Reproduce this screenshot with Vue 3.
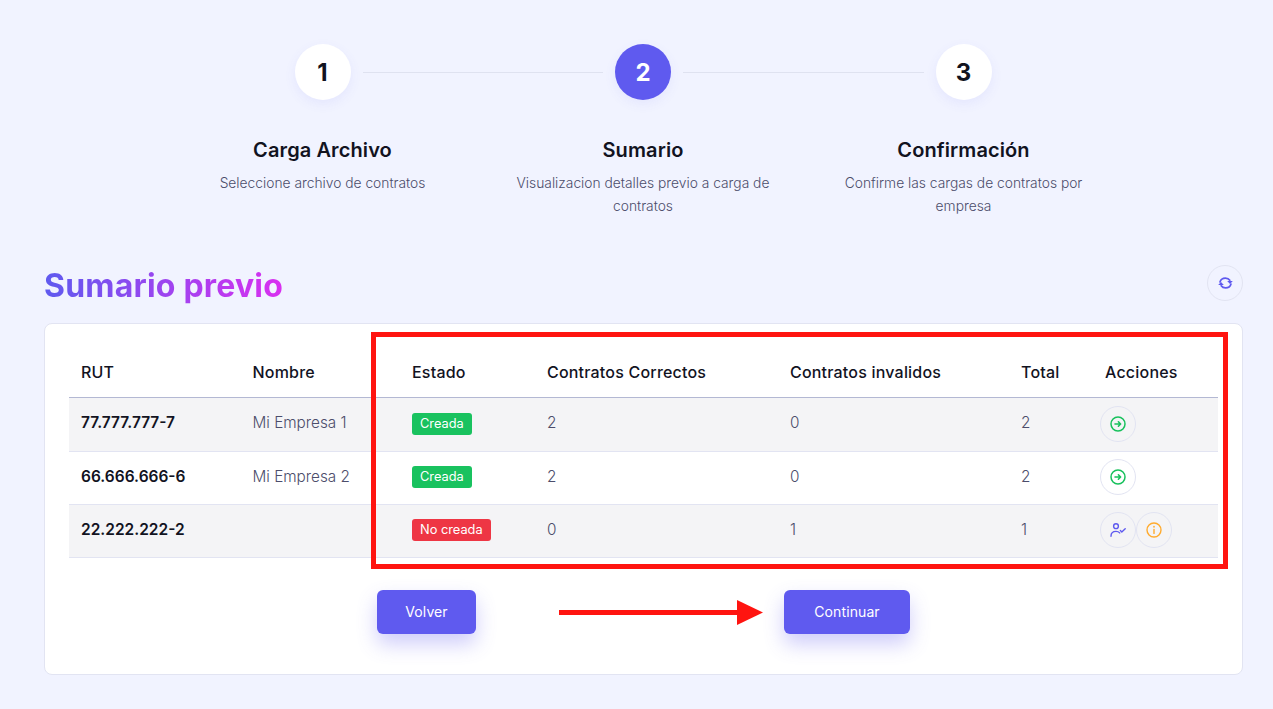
<script setup>
const steps = [
  { n: 1, title: 'Carga Archivo', desc: 'Seleccione archivo de contratos' },
  { n: 2, title: 'Sumario', desc: 'Visualizacion detalles previo a carga de contratos', active: true },
  { n: 3, title: 'Confirmación', desc: 'Confirme las cargas de contratos por empresa' }
]
const rows = [
  { rut: '77.777.777-7', name: 'Mi Empresa 1', ok: true, good: 2, bad: 0, total: 2 },
  { rut: '66.666.666-6', name: 'Mi Empresa 2', ok: true, good: 2, bad: 0, total: 2 },
  { rut: '22.222.222-2', name: '', ok: false, good: 0, bad: 1, total: 1 }
]
</script>

<template>
  <div class="page">
    <div class="stepper">
      <div v-for="(s, i) in steps" :key="s.n" class="step">
        <div class="track">
          <span class="line" :class="{ hidden: i === 0 }"></span>
          <div class="circle" :class="{ active: s.active }">{{ s.n }}</div>
          <span class="line" :class="{ hidden: i === 2 }"></span>
        </div>
        <h3>{{ s.title }}</h3>
        <p>{{ s.desc }}</p>
      </div>
    </div>

    <div class="head">
      <h1>Sumario previo</h1>
      <button class="icon-btn refresh" aria-label="Actualizar">
        <svg width="15" height="12" viewBox="0 0 15 12" fill="none" stroke="#5f5aef" stroke-width="1.7" stroke-linecap="round">
          <path d="M2 5C2.7 2.6 4.8 1.1 7.4 1.1c1.9 0 3.5.8 4.4 2.2" />
          <path d="M13 7c-.7 2.4-2.8 3.9-5.4 3.9-1.9 0-3.5-.8-4.4-2.2" />
          <path d="M9.2 4.1h5.6L12 7z" fill="#5f5aef" stroke="none" />
          <path d="M5.8 7.9H.2L3 5z" fill="#5f5aef" stroke="none" />
        </svg>
      </button>
    </div>

    <div class="card">
      <table>
        <colgroup>
          <col style="width: 172px" />
          <col style="width: 159px" />
          <col style="width: 135px" />
          <col style="width: 243px" />
          <col style="width: 231px" />
          <col style="width: 84px" />
          <col style="width: 125px" />
        </colgroup>
        <thead>
          <tr>
            <th>RUT</th><th>Nombre</th><th>Estado</th><th>Contratos Correctos</th><th>Contratos invalidos</th><th>Total</th><th>Acciones</th>
          </tr>
        </thead>
        <tbody>
          <tr v-for="r in rows" :key="r.rut">
            <td class="rut">{{ r.rut }}</td>
            <td class="name">{{ r.name }}</td>
            <td class="flat"><span class="badge" :class="r.ok ? 'green' : 'red'">{{ r.ok ? 'Creada' : 'No creada' }}</span></td>
            <td>{{ r.good }}</td>
            <td>{{ r.bad }}</td>
            <td>{{ r.total }}</td>
            <td class="flat actions">
              <div class="action-wrap">
                <button v-if="r.ok" class="icon-btn" aria-label="Ver">
                  <svg width="16" height="16" viewBox="0 0 16 16" fill="none" stroke="#17c15c" stroke-width="1.5" stroke-linecap="round" stroke-linejoin="round">
                    <circle cx="8" cy="8" r="7" />
                    <path d="M5 8h5.5M8.4 5.8 10.6 8 8.4 10.2" stroke-width="1.6" />
                  </svg>
                </button>
                <template v-else>
                  <button class="icon-btn" aria-label="Crear">
                    <svg width="16" height="14" viewBox="0 0 16 14" fill="none" stroke="#5f5aef" stroke-width="1.4" stroke-linecap="round" stroke-linejoin="round">
                      <circle cx="6" cy="3.2" r="2.4" />
                      <path d="M1 13.2c0-3 2.2-4.8 5-4.8 1.6 0 2.8.5 3.7 1.5" />
                      <path d="M10.4 7.6l1.4 1.4 3.4-3.2" />
                    </svg>
                  </button>
                  <button class="icon-btn" aria-label="Información">
                    <svg width="16" height="16" viewBox="0 0 16 16" fill="none" stroke="#ffab2e" stroke-width="1.4" stroke-linecap="round">
                      <circle cx="8" cy="8" r="7" />
                      <path d="M8 7.4v4" />
                      <path d="M8 4.6v.3" stroke-width="1.6" />
                    </svg>
                  </button>
                </template>
              </div>
            </td>
          </tr>
        </tbody>
      </table>

      <div class="buttons">
        <button class="btn volver">Volver</button>
        <button class="btn continuar">Continuar</button>
      </div>
    </div>

    <div class="highlight"></div>
    <svg class="arrow" width="204" height="26" viewBox="0 0 204 26">
      <rect x="0" y="11" width="180" height="5" fill="#ff1410" />
      <path d="M178 1 204 13.5 178 26z" fill="#ff1410" />
    </svg>
  </div>
</template>

<style scoped>
.page {
  position: relative;
  box-sizing: border-box;
  min-height: 709px;
  padding: 44px 30px 0 44px;
  background: #f1f3ff;
  font-family: Inter, "Noto Sans", sans-serif;
  color: #4c4d6b;
}
.stepper {
  display: grid;
  grid-template-columns: repeat(3, 320.5px);
  justify-content: center;
  margin-right: 1px;
  height: 200px;
}
.step {
  text-align: center;
}
.track {
  display: flex;
  align-items: center;
  gap: 12px;
}
.line {
  flex: 1;
  height: 1px;
  background: #dfe2f0;
}
.line.hidden {
  visibility: hidden;
}
.circle {
  width: 56px;
  height: 56px;
  border-radius: 50%;
  background: #fff;
  color: #12131f;
  display: flex;
  align-items: center;
  justify-content: center;
  font: 700 24px Inter, sans-serif;
  box-shadow: 0 4px 12px rgba(95, 90, 239, .08);
}
.circle.active {
  background: #5f5aef;
  color: #fff;
}
.step h3 {
  margin: 36px 0 0;
  font: 600 20px/28px Inter, sans-serif;
  letter-spacing: .1px;
  color: #12131f;
}
.step p {
  margin: 8px auto 0;
  width: 270px;
  font-size: 13.8px;
  font-weight: 300;
  line-height: 23px;
  color: #4c4d6b;
}
.head {
  display: flex;
  align-items: center;
  justify-content: space-between;
  margin-top: 21px;
  height: 42px;
}
.head h1 {
  margin: 0;
  font: 700 32px/42px Inter, sans-serif;
  letter-spacing: .2px;
  background: linear-gradient(90deg, #5f5aef 0%, #d92ff0 100%);
  -webkit-background-clip: text;
  background-clip: text;
  color: transparent;
}
.icon-btn {
  box-sizing: border-box;
  width: 36px;
  height: 36px;
  padding: 0;
  border: 1px solid #e2e4f2;
  border-radius: 50%;
  background: transparent;
  display: inline-flex;
  align-items: center;
  justify-content: center;
}
.refresh {
  margin-top: -6px;
}
.card {
  box-sizing: border-box;
  margin-top: 16px;
  height: 352px;
  padding: 23px 24px 0;
  background: #fff;
  border: 1px solid #e2e4f2;
  border-radius: 8px;
}
table {
  width: 1149px;
  table-layout: fixed;
  border-collapse: collapse;
  font-size: 15.3px;
  font-weight: 300;
}
th {
  height: 50px;
  box-sizing: border-box;
  padding: 0 12px;
  text-align: left;
  font: 500 16px Inter, sans-serif;
  letter-spacing: .2px;
  color: #12131f;
  border-bottom: 1px solid #b3b8d3;
}
th:nth-child(2),
.name {
  padding-left: 11.5px;
}
td {
  height: 53px;
  box-sizing: border-box;
  padding: 0 12px 3px;
  border-bottom: 1px solid #e2e4f2;
  white-space: nowrap;
}
tbody tr:first-child td {
  height: 54px;
  padding-bottom: 4px;
}
td.flat {
  padding-bottom: 2px;
}
tbody tr:first-child td.flat {
  padding-bottom: 0;
}
td.actions {
  padding-left: 7px;
}
tbody tr:nth-child(odd) {
  background: #f4f4f6;
}
.rut {
  font: 600 15.5px Inter, sans-serif;
  color: #12131f;
}
.badge {
  display: inline-block;
  padding: 0 8px;
  height: 22px;
  border-radius: 3px;
  color: #fff;
  font: 400 12.8px/22px Inter, sans-serif;
  vertical-align: middle;
}
.green {
  background: #19c25f;
}
.red {
  background: #ee3644;
}
.action-wrap {
  display: flex;
}
.buttons {
  display: flex;
  gap: 308px;
  margin-top: 32px;
  padding-left: 308px;
}
.btn {
  height: 44px;
  border: 0;
  border-radius: 6px;
  background: #5f5aef;
  color: #fff;
  font: 400 14px Inter, sans-serif;
  letter-spacing: .1px;
  box-shadow: 0 10px 20px rgba(95, 90, 239, .3);
}
.volver {
  width: 99px;
}
.continuar {
  width: 126px;
}
.highlight {
  position: absolute;
  left: 371px;
  top: 332px;
  width: 857px;
  height: 237px;
  box-sizing: border-box;
  border: 5px solid #ff1410;
  pointer-events: none;
}
.arrow {
  position: absolute;
  left: 559px;
  top: 599px;
}
</style>

<style>
body {
  background: #f1f3ff;
}
</style>
